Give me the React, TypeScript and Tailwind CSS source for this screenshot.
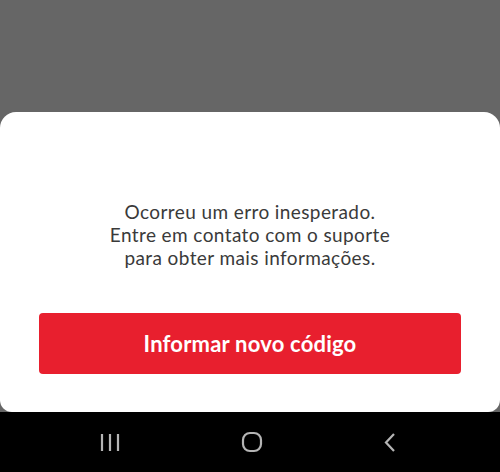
import * as React from 'react';

function NavBar() {
  return (
    <div className="h-[60px] bg-black flex items-center justify-between pl-[100px] pr-[104px]">
      <svg width="20" height="19" viewBox="0 0 20 19" fill="none" stroke="#b5b5b5" strokeWidth={2.2}>
        <path d="M2 1v17M10 1v17M18 1v17" />
      </svg>
      <svg width="22" height="22" viewBox="0 0 22 22" fill="none" stroke="#b5b5b5" strokeWidth={2.2}>
        <rect x="2" y="2" width="18" height="18" rx="7" />
      </svg>
      <svg width="12" height="21" viewBox="0 0 12 21" fill="none" stroke="#b5b5b5" strokeWidth={2.2}>
        <path d="M10 2 2 10.5l8 8.5" />
      </svg>
    </div>
  );
}

export default function App() {
  return (
    <div className="h-[472px] w-[500px] bg-[#666666] flex flex-col font-['Lato',sans-serif]">
      <div className="flex-1" />
      <div className="bg-white rounded-t-[16px] rounded-b-[12px] pt-[88px] pb-[38px] px-[39px]">
        <p className="text-center text-[19px] leading-[23px] tracking-[0.4px] text-[#3a3a3a]">
          Ocorreu um erro inesperado.
          <br />
          Entre em contato com o suporte
          <br />
          para obter mais informações.
        </p>
        <button className="mt-[44px] w-full h-[61px] rounded-[4px] bg-[#e81f2e] text-white text-[22px] tracking-[0.2px] font-bold">
          Informar novo código
        </button>
      </div>
      <NavBar />
    </div>
  );
}
